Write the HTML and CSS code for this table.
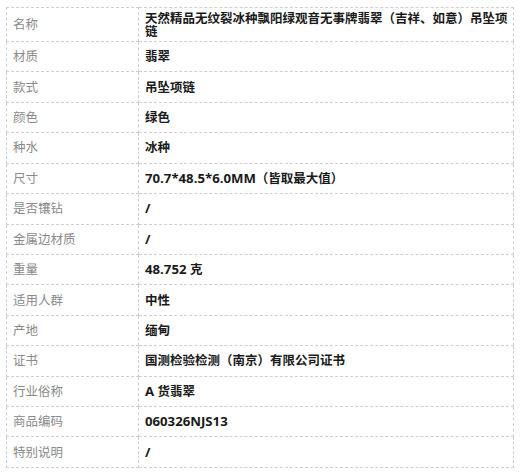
FILE: index.html
```html
<!DOCTYPE html>
<html lang="zh">
<head>
<meta charset="utf-8">
<title>商品参数</title>
<link rel="stylesheet" href="styles.css">
</head>
<body>
<table class="spec">
  <tbody>
    <tr class="first"><td class="label">名称</td><td class="value">天然精品无纹裂冰种飘阳绿观音无事牌翡翠（吉祥、如意）吊坠项链</td></tr>
    <tr><td class="label">材质</td><td class="value">翡翠</td></tr>
    <tr><td class="label">款式</td><td class="value">吊坠项链</td></tr>
    <tr><td class="label">颜色</td><td class="value">绿色</td></tr>
    <tr><td class="label">种水</td><td class="value">冰种</td></tr>
    <tr><td class="label">尺寸</td><td class="value"><span class="latin">70.7*48.5*6.0MM</span>（皆取最大值）</td></tr>
    <tr><td class="label">是否镶钻</td><td class="value"><span class="latin">/</span></td></tr>
    <tr><td class="label">金属边材质</td><td class="value"><span class="latin">/</span></td></tr>
    <tr><td class="label">重量</td><td class="value"><span class="latin">48.752 </span>克</td></tr>
    <tr><td class="label">适用人群</td><td class="value">中性</td></tr>
    <tr><td class="label">产地</td><td class="value">缅甸</td></tr>
    <tr><td class="label">证书</td><td class="value">国测检验检测（南京）有限公司证书</td></tr>
    <tr><td class="label">行业俗称</td><td class="value"><span class="latin">A </span>货翡翠</td></tr>
    <tr><td class="label">商品编码</td><td class="value"><span class="latin">060326NJS13</span></td></tr>
    <tr><td class="label">特别说明</td><td class="value"><span class="latin">/</span></td></tr>
  </tbody>
</table>
</body>
</html>
```
FILE: styles.css
```css
html, body {
  margin: 0;
  padding: 0;
  background: #ffffff;
}
body {
  padding: 7px 6px 0 6px;
  font-family: "Open Sans", "Noto Sans CJK SC", sans-serif;
  font-size: 12.5px;
}
.spec {
  width: 508px;
  border-collapse: collapse;
  table-layout: fixed;
}
.spec td {
  border: 1px dashed #cfcfcf;
  height: 29.43px;
  padding: 0 6px;
  vertical-align: middle;
  line-height: 13px;
  box-sizing: content-box;
}
.spec .label {
  width: 119px;
  color: #8a8a8a;
  font-weight: 400;
}
.spec .value {
  color: #1a1a1a;
  font-weight: 700;
  padding-right: 1px;
}
.spec .latin {
  font-size: 13.2px;
}
.spec .first td {
  height: 33px;
}
```
